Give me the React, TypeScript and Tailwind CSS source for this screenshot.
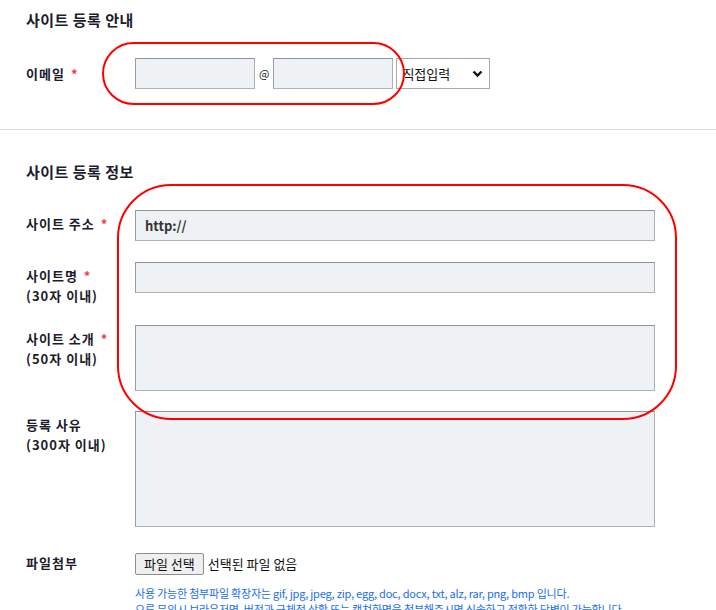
const inputCls =
  'h-[31px] border border-[#adb1b6] border-t-[#8f9398] border-l-[#9a9ea3] bg-[#eff2f5]';

const labelCls = 'w-[109px] text-[13px] font-bold leading-[20px] tracking-[1px]';

function Req() {
  return <span className="ml-[6px] text-[#e8404a]">*</span>;
}

export default function App() {
  return (
    <div className="relative w-[716px] min-h-[610px] overflow-hidden bg-white font-['Noto_Sans_CJK_KR','Noto_Sans',sans-serif] text-[#1c1c2c]">
      {/* 안내 */}
      <section className="border-b border-[#dedede] px-[26px] pb-[40px] pt-[11px]">
        <h2 className="text-[15px] font-bold leading-[18px] tracking-[0.5px]">사이트 등록 안내</h2>
        <div className="mt-[29px] flex items-center">
          <div className={labelCls}>
            이메일
            <Req />
          </div>
          <div className={`${inputCls} w-[120px]`} />
          <span className="mx-[4px] text-[11px] text-[#222]">@</span>
          <div className={`${inputCls} w-[120px]`} />
          <div className="ml-[3px] flex h-[31px] w-[94px] items-center justify-between border border-[#a9a9a9] bg-white pl-[5px] pr-[6px] text-[13px] text-[#111]">
            <span>직접입력</span>
            <svg width="11" height="8" viewBox="0 0 11 8">
              <polyline points="1.5,1.5 5.5,5.5 9.5,1.5" fill="none" stroke="#111" strokeWidth="2.4" />
            </svg>
          </div>
        </div>
      </section>

      {/* 정보 */}
      <section className="px-[26px] pt-[33px]">
        <h2 className="text-[15px] font-bold leading-[18px] tracking-[0.5px]">사이트 등록 정보</h2>

        <div className="mt-[29px] flex items-start">
          <div className={`${labelCls} pt-[4px]`}>
            사이트 주소
            <Req />
          </div>
          <div className={`${inputCls} flex w-[520px] items-center pl-[9px] text-[13px] font-bold text-[#333]`}>
            http://
          </div>
        </div>

        <div className="mt-[21px] flex items-start">
          <div className={`${labelCls} pt-[4px]`}>
            사이트명
            <Req />
            <br />
            (30자 이내)
          </div>
          <div className={`${inputCls} w-[520px]`} />
        </div>

        <div className="mt-[19px] flex items-start">
          <div className={`${labelCls} pt-[4px]`}>
            사이트 소개
            <Req />
            <br />
            (50자 이내)
          </div>
          <div className={`${inputCls} h-[66px] w-[520px]`} />
        </div>

        <div className="mt-[20px] flex items-start">
          <div className={`${labelCls} pt-[4px]`}>
            등록 사유
            <br />
            (300자 이내)
          </div>
          <div className={`${inputCls} h-[116px] w-[520px]`} />
        </div>

        <div className="mt-[26px] flex items-start">
          <div className={labelCls}>파일첨부</div>
          <div>
            <div className="flex items-center text-[13px] leading-[20px] text-[#111]">
              <span className="rounded-[2px] border border-[#8f8f8f] bg-[#efefef] px-[8px]">파일 선택</span>
              <span className="ml-[4px]">선택된 파일 없음</span>
            </div>
            <p className="mt-[10px] text-[11px] leading-[16px] tracking-[-0.2px] text-[#1a6ef0]">
              사용 가능한 첨부파일 확장자는 gif, jpg, jpeg, zip, egg, doc, docx, txt, alz, rar, png, bmp 입니다.
              <br />
              오류 문의시 브라우저명, 버전과 구체적 상황 또는 캡쳐화면을 첨부해주시면 신속하고 정확한 답변이 가능합니다.
            </p>
          </div>
        </div>
      </section>

      {/* 강조 표시 */}
      <div className="pointer-events-none absolute left-[102px] top-[42px] h-[63px] w-[303px] rounded-full border-2 border-[#ff0000]" />
      <div className="pointer-events-none absolute left-[117px] top-[184px] h-[236px] w-[560px] rounded-[54px] border-2 border-[#ff0000]" />
    </div>
  );
}
